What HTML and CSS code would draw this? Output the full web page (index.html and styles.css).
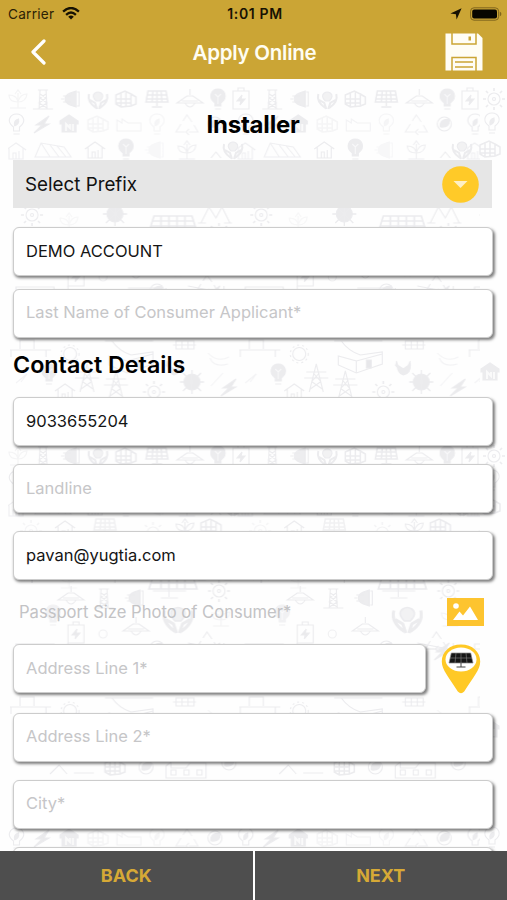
FILE: index.html
```html
<!DOCTYPE html>
<html lang="en">
<head>
    <meta charset="utf-8">
    <title>Apply Online</title>
    <meta name="viewport" content="width=device-width, initial-scale=1">
    <link rel="stylesheet" href="styles.css">
</head>
<body>
    <header class="top">
        <div class="status-bar">
            <div class="carrier">
                <span>Carrier</span>
                <svg width="18" height="13" viewBox="0 0 18 13">
                    <g fill="none" stroke="#171203" stroke-width="2.3">
                        <path d="M1.1 4.6 Q9 -2.6 16.9 4.6"/>
                        <path d="M4.1 7.8 Q9 3.3 13.9 7.8"/>
                    </g>
                    <path d="M6.2 9.7 Q9 7.4 11.8 9.7 L9 12.5 Z" fill="#171203"/>
                </svg>
            </div>
            <div class="time">1:01 PM</div>
            <div class="indicators">
                <svg width="12" height="12" viewBox="0 0 12 12"><path d="M11.6 0.3 L6.6 11.4 L5.9 6.2 L0.4 5.4 Z" fill="#171203"/></svg>
                <svg width="32" height="14" viewBox="0 0 32 14">
                    <rect x="0.6" y="0.8" width="28" height="12.4" rx="3.4" fill="none" stroke="#80661e"/>
                    <rect x="2.2" y="2.4" width="24.8" height="9.2" rx="2" fill="#080600"/>
                    <path d="M29.8 4.8 Q31.4 5.3 31.4 7 T29.8 9.2 Z" fill="#80661e"/>
                </svg>
            </div>
        </div>
        <nav class="nav-bar">
            <button class="icon-button" aria-label="Previous">
                <svg width="17" height="26" viewBox="0 0 17 26"><path d="M14 2 L3 13 L14 24" fill="none" stroke="#fff" stroke-width="3.2" stroke-linecap="round" stroke-linejoin="round"/></svg>
            </button>
            <h1>Apply Online</h1>
            <button class="icon-button" aria-label="Save">
                <svg width="38" height="38" viewBox="0 0 38 38">
                    <path d="M0.5 0.5 H33 L37.5 5 V37.5 H0.5 Z" fill="#fffdf5"/>
                    <path d="M7 0 V11 H31 V0 M7 38 V24.5 H31 V38 M10 29 H28 M10 34 H28" fill="none" stroke="#cba535" stroke-width="1.5"/>
                    <rect x="23.5" y="3.5" width="2.5" height="4" fill="#cba535"/>
                </svg>
            </button>
        </nav>
    </header>

    <main class="content">
        <svg class="doodles" aria-hidden="true">
            <defs>
                <g id="bulb"><path d="M-3 7 V4 C-11 -2 -6 -10 0 -10 S11 -2 3 4 V7 Z M-3 10 H3" fill="#e9e9ec"/><path d="M0 5 V-3 M-3 -5 L0 -2 L3 -5" stroke="#f8f8f9"/></g>
                <g id="bulb-line"><path d="M-3 7 V3 C-11 -3 -6 -10 0 -10 S11 -3 3 3 V7 Z M-3 10 H3"/><path d="M-2 2 Q-3 -4 2 -5 Q3 0 -2 2" fill="#e9e9ec"/></g>
                <g id="bolt"><path d="M7 -8 L-6 1 H0 L-8 9 L7 0 H2 Z" fill="#e7e7ea"/></g>
                <g id="house"><path d="M-10 -1 L0 -8 L10 -1 M-7 -3 V8 H7 V-3 M-3 8 V2 H0 V8 M3 8 V0" /></g>
                <g id="home"><path d="M-9 -3 L0 -9 L9 -3 V0 H7 V8 H-7 V0 H-9 Z" fill="#e9e9ec"/><path d="M-3 7 V0 L1 4 V0 M4 0 V7" stroke="#fafafa" stroke-width="2"/></g>
                <g id="tower"><path d="M-4 10 L-3 -9 H3 L4 10 M-5 -9 H5 M-3 -5 L3 -1 L-4 4 L4 9 M3 -5 L-3 -1 L4 4 L-4 9 M-10 10 H10"/></g>
                <g id="plug"><path d="M-1 -6 L5 -8 V8 L-1 6 Q-6 4 -6 0 T-1 -6" fill="#ebebed"/><path d="M-7 0 H-10 M-1 -3 H-8 M-1 3 H-8 M6 -7 H8 V7 H6"/></g>
                <g id="hands"><path d="M-9 -5 Q-11 3 -2 9 M9 -5 Q11 3 2 9 M-8 1 L-3 4 L-1 10 M8 1 L3 4 L1 10" stroke-width="2"/><path d="M-2 2 Q-7 -3 -3 -6 Q0 -8 3 -6 Q7 -3 2 2 Z" fill="#f0f0f2"/></g>
                <g id="cube"><path d="M-10 -4 L-1 -8 L5 -5 V7 L-5 8 L-10 5 Z M-10 0 H5 M-10 4 H5 M-5 -7 V8 M0 -8 V7 M5 -5 L10 -2 V5 L5 7" stroke-width="1.5"/></g>
                <g id="panel"><path d="M-9 -8 H9 L11 3 H-11 Z M-10 -4 H10 M-11 0 H11 M-4 -8 L-5 3 M4 -8 L5 3 M0 -8 V7 M-5 8 H5" stroke-width="1.5"/></g>
                <g id="lamp"><path d="M0 -10 V-4 M-13 4 L-3 -3 H3 L13 4 Z M-5 4 Q0 12 5 4 M-8 2 H8"/></g>
                <g id="battery"><path d="M-8 -8 H8 V10 H-8 Z M-3 -8 V-11 H3 V-8"/><path d="M1 -4 L-4 2 H0 L-1 6 L4 0 H0 Z" fill="#e7e7ea"/></g>
                <g id="sun"><circle r="8" fill="#e8e8eb"/><path d="M0 -12 V12 M-12 0 H12 M-9 -9 L9 9 M9 -9 L-9 9" stroke-width="1.3"/></g>
                <g id="sun-line"><circle r="6"/><circle r="1.5"/><path d="M0 -11 V-8 M0 8 V11 M-11 0 H-8 M8 0 H11 M-8 -8 L-6 -6 M6 6 L8 8 M8 -8 L6 -6 M-6 6 L-8 8" stroke-width="1.6"/></g>
                <g id="recycle"><path d="M-4 -3 L0 -9 L5 -2 M7 1 L11 8 H2 M-2 8 H-11 L-6 0 M2 5 L-1 8 L2 11"/></g>
                <g id="plant"><path d="M0 9 V-6 M0 3 Q-9 3 -9 -4 Q-1 -4 0 3 Q2 -5 9 -5 Q8 3 0 3 M-8 9 H8 M-3 -5 L0 -9 L3 -5"/></g>
                <g id="pylon"><path d="M-7 14 L0 -14 L7 14 M-10 -6 H10 M-12 0 H12 M-4 4 L6 11 M4 4 L-6 11 M-3 -5 L4 3 M3 -5 L-4 3"/></g>
                <g id="globe"><circle r="7"/><path d="M-4 3 Q-5 -5 5 -5 Q6 4 -4 3" fill="#e9e9ec"/></g>

                <pattern id="energy" x="8" y="5" width="229.3" height="357" patternUnits="userSpaceOnUse">
                    <g class="ink">
                        <use href="#tower" x="35" y="15"/>
                        <use href="#plug" x="63" y="15"/>
                        <use href="#hands" x="90" y="15"/>
                        <use href="#cube" x="118" y="15"/>
                        <use href="#panel" x="149" y="15"/>
                        <use href="#lamp" x="182" y="15"/>
                        <use href="#bulb" x="210" y="15"/>

                        <use href="#bulb-line" x="8.5" y="40"/>
                        <use href="#bolt" x="34" y="40"/>
                        <use href="#home" x="61" y="40"/>
                        <use href="#cube" x="90" y="40" opacity=".5"/>
                        <path d="M109 47 V36 L114 39 V35 L120 39 H133 V47 Z" opacity=".6"/>
                        <use href="#bulb-line" x="149" y="40" opacity=".5"/>
                        <use href="#recycle" x="179" y="40" opacity=".7"/>
                        <use href="#globe" x="207" y="40"/>

                        <use href="#house" x="8" y="67" opacity=".8"/>
                        <path d="M27 73 L33 59 L56 63 L63 73 Z M33 59 L42 73 M42 61 L51 73 M49 62 L58 73" opacity=".8"/>
                        <use href="#house" x="87" y="66"/>
                        <use href="#bulb" x="118" y="65"/>
                        <use href="#plug" x="147" y="66" opacity=".4"/>
                        <use href="#plant" x="179" y="66" opacity=".8"/>
                        <path d="M203 74 L208 68 L213 74"/>

                        <use href="#sun-line" x="23" y="90" opacity=".5"/>
                        <use href="#house" x="57" y="88"/>
                        <use href="#panel" x="97" y="86" opacity=".7"/>
                        <use href="#sun-line" x="145" y="92" opacity=".6"/>
                        <use href="#plant" x="177" y="87"/>
                        <use href="#cube" x="203" y="86"/>

                        <use href="#sun-line" x="24" y="131"/>
                        <use href="#plant" x="61" y="138" opacity=".4"/>
                        <use href="#sun" x="107" y="130"/>
                        <path d="M146 132 H184 L189 148 H141 Z M145 137 H185 M143 142 H187 M153 132 V148 M161 132 V148 M169 132 V148 M177 132 V148" stroke-width="1.7"/>
                        <path d="M193 139 L201 123 L208 134 L214 123 L222 139 M190 139 H198 M216 139 H224"/>

                        <use href="#lamp" x="63" y="155"/>
                        <use href="#tower" x="96" y="157"/>
                        <use href="#plug" x="127" y="157"/>
                        <path d="M145 150 H178 M161 140 V156 M153 157 H170"/>
                        <use href="#sun-line" x="211" y="150"/>
                        <use href="#bulb" x="45" y="174" opacity=".7"/>
                        <use href="#battery" x="68" y="192"/>
                        <use href="#lamp" x="128" y="186"/>
                        <g transform="translate(170 177) scale(1.5)"><use href="#hands"/></g>
                        <circle cx="95" cy="193" r="4" opacity=".7"/>
                        <use href="#globe" x="149" y="207"/>
                        <use href="#recycle" x="199" y="200"/>
                        <use href="#plant" x="213" y="176" opacity=".6"/>

                        <path d="M8 218 V203 H46 V208 M8 208 H44 M60 202 V226 H88 M120 204 H147 V213 M158 204 V215 M170 208 H216 M180 202 L206 207 M216 202 V220"/>
                        <use href="#bolt" x="205" y="210"/>

                        <path d="M2 266 H43 M12 265 V256 H26 V265 M3 266 V273 M38 266 V273"/>
                        <circle cx="62" cy="270" r="6.5"/><circle cx="62" cy="270" r="9" stroke-dasharray="2 3"/>
                        <path d="M97 257 H145 M104 257 Q111 267 123 271 L145 268 V280 L119 289 L101 281 V272 L119 277 V289 M119 277 L145 270"/>
                        <path d="M129 276 H134 V284 H129 Z" fill="#e4e4e7"/>
                        <path d="M168 257 H186 V265 H168 Z M174 257 V265 M180 257 V265 M165 261 H188"/>
                        <path d="M200 269 Q209 279 221 273 M202 274 Q206 284 220 280" opacity=".6"/>
                        <path d="M8 299 L19 290 L13 298 M203 302 L215 289" opacity=".6"/>
                        <use href="#bulb" x="41" y="290"/>
                        <use href="#pylon" x="79" y="294"/>
                        <use href="#pylon" x="108" y="301"/>
                        <use href="#house" x="57" y="308"/>
                        <use href="#sun-line" x="146" y="308"/>
                        <use href="#sun" x="184" y="298"/>
                        <path d="M159 277 L162 286 L158 281 M173 277 L169 286 Q174 286 173 279 M160 281 Q160 289 166 291 Q174 289 173 280 L166 285 Z" fill="#e9e9ec"/>
                        <use href="#bolt" x="221" y="303"/>

                        <path d="M42 333 L51 324 L59 333 M66 332 H86" />
                        <use href="#cube" x="107" y="326"/>
                        <use href="#globe" x="138" y="326"/>
                        <path d="M158 337 V325 L163 321 V327 H178 L182 322 H198 V337 Z M163 329 H168 V334 H163 Z M176 329 H181 V334 H176 Z M189 329 H194 V334 H189 Z"/>
                        <use href="#globe" x="221" y="322"/>
                    </g>
                </pattern>

                <!-- drawings that straddle the edges of a tile -->
                <g id="edges">
                    <use href="#plant" x="18" y="20" opacity=".5"/>
                    <use href="#battery" x="241" y="20"/>
                    <use href="#battery" x="470" y="20"/>
                    <use href="#sun-line" x="494" y="20"/>
                    <use href="#hands" x="233" y="70"/>
                    <use href="#hands" x="462" y="70"/>
                    <use href="#bulb-line" x="492" y="44"/>
                    <use href="#cube" x="490" y="70"/>
                    <use href="#home" x="490" y="293"/>
                </g>
            </defs>
            <rect x="8" y="5" width="472" height="767" fill="url(#energy)"/>
            <g class="ink">
                <use href="#edges"/>
                <use href="#edges" y="357"/>
                <use href="#bulb-line" x="492" y="758"/>
            </g>
        </svg>

        <form class="form">
            <h2 class="title">Installer</h2>
            <div class="select">
                <span>Select Prefix</span>
                <svg width="37" height="37" viewBox="0 0 37 37"><circle cx="18.5" cy="18.5" r="18.3" fill="#ffca28"/><path d="M11.5 15 H25.5 L18.5 22 Z" fill="#fff0c4"/></svg>
            </div>
            <input class="field" type="text" value="DEMO ACCOUNT">
            <input class="field last-name" type="text" placeholder="Last Name of Consumer Applicant*">

            <h2 class="section">Contact Details</h2>
            <div class="group">
                <input class="field" type="text" value="9033655204">
                <input class="field" type="text" placeholder="Landline">
                <input class="field email" type="text" value="pavan@yugtia.com">
            </div>

            <div class="photo-row">
                <span>Passport Size Photo of Consumer*</span>
                <svg width="37" height="28" viewBox="0 0 37 28">
                    <rect width="37" height="28" fill="#fdc42f"/>
                    <circle cx="9" cy="8" r="2.8" fill="#fff"/>
                    <path d="M6 22 L12.5 13.5 L16 17.5 L23 8.5 L31 22 Z" fill="#fff"/>
                </svg>
            </div>

            <div class="group">
                <div class="address-row">
                    <input class="field" type="text" placeholder="Address Line 1*">
                    <svg width="40" height="50" viewBox="0 0 40 50">
                        <path d="M20 0.5 C8.5 0.5 0.8 8 0.8 17.5 C0.8 26 8 33 16.8 47.5 Q20 51 23.2 47.5 C32 33 39.2 26 39.2 17.5 C39.2 8 31.5 0.5 20 0.5 Z" fill="#ffc926"/>
                        <ellipse cx="20" cy="15.5" rx="15.5" ry="12" fill="#fff"/>
                        <path d="M10.3 9 H29.7 L32 19 H8 Z" fill="#161616" stroke="#8a8a8a" stroke-width=".7"/>
                        <path d="M9 14 H31 M15 9 L14 19 M20 9 V19 M25 9 L26 19" stroke="#777" stroke-width=".7"/>
                        <path d="M20 19 V23 M15.5 23 H24.5" stroke="#444"/>
                    </svg>
                </div>
                <input class="field" type="text" placeholder="Address Line 2*">
                <input class="field" type="text" placeholder="City*">
                <input class="field" type="text">
            </div>
        </form>
    </main>

    <footer class="actions">
        <button>BACK</button>
        <button>NEXT</button>
    </footer>
</body>
</html>
```
FILE: styles.css
```css
* { box-sizing: border-box; }
body {
    margin: 0;
    height: 100vh;
    display: flex;
    flex-direction: column;
    overflow: hidden;
    background: #fff;
    color: #111;
    font-family: Inter, "Liberation Sans", sans-serif;
}
button, input { font-family: inherit; }
h1, h2 { margin: 0; }
svg { display: block; flex: none; }

.top {
    flex: none;
    height: 79px;
    background: #cba535;
}
.status-bar {
    height: 27px;
    padding: 0 5px 0 8px;
    display: grid;
    grid-template-columns: 1fr auto 1fr;
    align-items: center;
    font-size: 13.6px;
    color: #2b2105;
}
.carrier, .indicators { display: flex; align-items: center; gap: 8px; }
.indicators { justify-content: flex-end; }
.carrier { letter-spacing: 0.25px; }
.time { font-weight: 600; font-size: 14px; letter-spacing: 0.65px; color: #171203; }
.nav-bar {
    height: 50px;
    padding: 0 24px 0 26px;
    display: grid;
    grid-template-columns: 1fr auto 1fr;
    align-items: center;
}
.nav-bar h1 {
    color: #fffdf2;
    font-size: 20.5px;
    font-weight: 600;
    letter-spacing: -0.25px;
}
.icon-button {
    padding: 0;
    border: none;
    background: none;
    cursor: pointer;
}
.icon-button:first-child { padding-left: 4px; justify-self: start; }
.icon-button:last-child { justify-self: end; }

.content {
    flex: 1;
    min-height: 0;
    position: relative;
    overflow: hidden;
    background: #fefefe;
}
.doodles {
    position: absolute;
    inset: 0;
    width: 100%;
    height: 100%;
    opacity: 0.85;
}
.ink {
    fill: none;
    stroke: #e9e9ec;
    stroke-width: 1.1;
}
.form {
    position: relative;
    padding: 0 14px 0 13px;
}
.title {
    height: 81px;
    padding-top: 10px;
    line-height: 71px;
    text-align: center;
    font-size: 24px;
    font-weight: 700;
    color: #000;
    letter-spacing: -0.2px;
}
.select {
    height: 48px;
    margin: 0 1px 19px 0;
    padding: 0 13px 0 12px;
    display: flex;
    align-items: center;
    justify-content: space-between;
    background: #e6e6e6;
    font-size: 18.8px;
}
.field {
    display: block;
    width: 100%;
    height: 49px;
    padding: 0 12px 2px;
    border: 1px solid #ccc;
    border-radius: 6px;
    background: #fff;
    box-shadow: 1.5px 2px 3px rgba(0, 0, 0, 0.5);
    color: #151515;
    font-size: 16.5px;
    outline: none;
}
.field::placeholder { color: #c6c6c8; opacity: 1; }
.last-name { margin-top: 12.5px; }
.section {
    height: 59.5px;
    line-height: 53px;
    font-size: 23.3px;
    font-weight: 600;
    color: #000;
}
.group {
    display: flex;
    flex-direction: column;
    gap: 18.2px;
}
.photo-row {
    height: 64px;
    padding: 0 9px 0 6px;
    display: flex;
    align-items: center;
    justify-content: space-between;
    font-size: 16.6px;
    color: #c3c3c5;
}
.address-row { display: flex; gap: 15px; padding-right: 12px; }

.actions {
    flex: none;
    height: 49px;
    display: grid;
    grid-template-columns: 1fr 1fr;
    gap: 2px;
}
.actions button {
    border: none;
    background: #4e4e4e;
    color: #d6a936;
    font-size: 18px;
    font-weight: 700;
    cursor: pointer;
}
```
